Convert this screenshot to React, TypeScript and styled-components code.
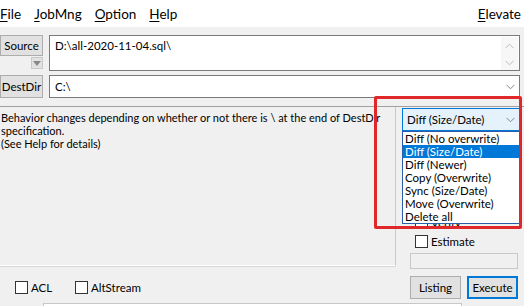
import React from "react";
import styled, { createGlobalStyle } from "styled-components";

const GlobalStyle = createGlobalStyle`
  html, body { margin: 0; padding: 0; background: #f0f0f0; }
  * { box-sizing: border-box; }
`;

const FONT = `"Lato", "Noto Sans", "Liberation Sans", sans-serif`;

const Window = styled.div`
  position: relative;
  width: 524px;
  height: 306px;
  overflow: hidden;
  background: #f0f0f0;
  font-family: ${FONT};
  font-size: 11px;
  color: #000;
`;

const MenuBar = styled.div`
  height: 27px;
  background: #fff;
  display: flex;
  align-items: center;
  padding: 0 3px 0 0;
  font-size: 13.5px;
`;

const MenuItem = styled.span<{ $push?: boolean }>`
  margin-right: ${(p) => (p.$push ? "0" : "13px")};
  margin-left: ${(p) => (p.$push ? "auto" : "0")};
  & u { text-decoration: underline; text-underline-offset: 2px; }
`;

const Content = styled.div`
  padding: 8px 4px 0 0;
  display: flex;
  flex-direction: column;
`;

const PathRow = styled.div<{ $gap?: number }>`
  display: grid;
  grid-template-columns: 43px 1fr;
  column-gap: 6px;
  margin-top: ${(p) => p.$gap ?? 0}px;
`;

const SideCol = styled.div`
  display: flex;
  flex-direction: column;
  align-items: flex-end;
  gap: 1px;
`;

const PushButton = styled.button<{ $h?: number; $w?: number; $primary?: boolean }>`
  width: ${(p) => (p.$w ? `${p.$w}px` : "100%")};
  height: ${(p) => p.$h ?? 22}px;
  padding: 0;
  background: #e1e1e1;
  border: 1px solid ${(p) => (p.$primary ? "#0078d7" : "#adadad")};
  box-shadow: ${(p) => (p.$primary ? "inset 0 0 0 1px #0078d7" : "none")};
  font-family: ${FONT};
  font-size: 11.5px;
  color: #000;
`;

const MiniDrop = styled.div`
  width: 12px;
  height: 12px;
  background: #e1e1e1;
  border: 1px solid #c8c8c8;
  display: flex;
  align-items: center;
  justify-content: center;
`;

const TextBox = styled.div<{ $h: number }>`
  height: ${(p) => p.$h}px;
  background: #fff;
  border: 1px solid #7a7a7a;
  display: flex;
  align-items: ${(p) => (p.$h > 30 ? "flex-start" : "center")};
  padding: ${(p) => (p.$h > 30 ? "3px 0 0 5px" : "0 0 0 5px")};
  font-size: 11.5px;
`;

const TextValue = styled.span`
  flex: 1;
`;

const ScrollBar = styled.div`
  width: 17px;
  align-self: stretch;
  margin: -2px 1px 0 0;
  display: flex;
  flex-direction: column;
  justify-content: space-between;
  align-items: center;
  padding: 6px 0 4px;
  background: #f7f7f7;
`;

const DropArrow = styled.div`
  width: 17px;
  display: flex;
  justify-content: center;
`;

const Separator = styled.div`
  height: 1px;
  background: #a0a0a0;
  margin-top: 8px;
  margin-right: -4px;
`;

const Main = styled.div`
  display: grid;
  grid-template-columns: 396px 1fr;
  column-gap: 6px;
`;

const LeftCol = styled.div`
  display: flex;
  flex-direction: column;
`;

const InfoPanel = styled.div`
  height: 159px;
  border-right: 1px solid #c8c8c8;
  border-bottom: 1px solid #fff;
  box-shadow: 0 1px 0 #d8d8d8;
  padding: 4px 0 0 1px;
  line-height: 13px;
  font-size: 11px;
  white-space: nowrap;
`;

const CheckRow = styled.div`
  display: flex;
  padding: 14px 0 0 15px;
`;

const Check = styled.label<{ $w?: number }>`
  display: flex;
  align-items: center;
  gap: 3px;
  height: 14px;
  width: ${(p) => (p.$w ? `${p.$w}px` : "auto")};
  font-size: 11.5px;
`;

const Box = styled.span`
  width: 13px;
  height: 13px;
  background: #fff;
  border: 1px solid #333;
  display: inline-block;
`;

const RightCol = styled.div`
  position: relative;
  display: flex;
  flex-direction: column;
  padding-top: 1px;
`;

const Combo = styled.div`
  height: 23px;
  background: #e5f1fb;
  border: 1px solid #0078d7;
  display: flex;
  align-items: center;
  padding: 0 0 0 4px;
  font-size: 11.5px;
`;

const ComboText = styled.span`
  flex: 1;
`;

const OptionList = styled.div`
  display: flex;
  flex-direction: column;
  gap: 5px;
  padding: 84px 0 0 13px;
`;

const StatusBox = styled.div`
  height: 16px;
  margin: 5px 2px 0 8px;
  border: 1px solid #c8c8c8;
  background: #f0f0f0;
`;

const ButtonRow = styled.div`
  display: flex;
  gap: 6px;
  margin: 7px 2px 0 8px;
`;

const BottomInput = styled.div`
  margin: 4px 0 0 43px;
  width: 419px;
  height: 20px;
  background: #fff;
  border: 1px solid #c8c8c8;
`;

const DropList = styled.div`
  position: absolute;
  left: 0;
  top: 24px;
  width: 118px;
  border: 1px solid #2a5ea8;
  background: #fff;
  display: flex;
  flex-direction: column;
  z-index: 2;
`;

const DropItem = styled.div<{ $sel?: boolean }>`
  height: 13px;
  line-height: 13px;
  padding-left: 2px;
  font-size: 11.5px;
  background: ${(p) => (p.$sel ? "#0078d7" : "#fff")};
  color: ${(p) => (p.$sel ? "#fff" : "#000")};
  white-space: nowrap;
`;

const Highlight = styled.div`
  position: absolute;
  left: 374px;
  top: 96px;
  width: 148px;
  height: 133px;
  border: 3px solid #e0282a;
  border-radius: 2px;
  z-index: 3;
  pointer-events: none;
`;

const Chevron = ({ color = "#888" }: { color?: string }) => (
  <svg width="9" height="6" viewBox="0 0 9 6">
    <path d="M0.5 0.8 L4.5 4.8 L8.5 0.8" fill="none" stroke={color} strokeWidth="1" />
  </svg>
);

const ChevronUp = () => (
  <svg width="9" height="6" viewBox="0 0 9 6">
    <path d="M0.5 5.2 L4.5 1.2 L8.5 5.2" fill="none" stroke="#bbb" strokeWidth="1" />
  </svg>
);

const items = [
  "Diff (No overwrite)",
  "Diff (Size/Date)",
  "Diff (Newer)",
  "Copy (Overwrite)",
  "Sync (Size/Date)",
  "Move (Overwrite)",
  "Delete all",
];

export default function App() {
  return (
    <Window>
      <GlobalStyle />
      <MenuBar>
        <MenuItem><u>F</u>ile</MenuItem>
        <MenuItem><u>J</u>obMng</MenuItem>
        <MenuItem><u>O</u>ption</MenuItem>
        <MenuItem><u>H</u>elp</MenuItem>
        <MenuItem $push><u>E</u>levate</MenuItem>
      </MenuBar>
      <Content>
        <PathRow>
          <SideCol>
            <PushButton $h={21}>Source</PushButton>
            <MiniDrop>
              <svg width="8" height="5" viewBox="0 0 8 5">
                <path d="M0 0 H8 L4 5 Z" fill="#888" />
              </svg>
            </MiniDrop>
          </SideCol>
          <TextBox $h={36}>
            <TextValue>D:\all-2020-11-04.sql\</TextValue>
            <ScrollBar>
              <ChevronUp />
              <Chevron color="#bbb" />
            </ScrollBar>
          </TextBox>
        </PathRow>
        <PathRow $gap={4}>
          <PushButton $h={23}>DestDir</PushButton>
          <TextBox $h={23}>
            <TextValue>C:\</TextValue>
            <DropArrow>
              <Chevron />
            </DropArrow>
          </TextBox>
        </PathRow>
        <Separator />
        <Main>
          <LeftCol>
            <InfoPanel>
              Behavior changes depending on whether or not there is \ at the end of DestDir
              <br />
              specification.
              <br />
              (See Help for details)
            </InfoPanel>
            <CheckRow>
              <Check $w={60}><Box />ACL</Check>
              <Check><Box />AltStream</Check>
            </CheckRow>
          </LeftCol>
          <RightCol>
            <Combo>
              <ComboText>Diff (Size/Date)</ComboText>
              <DropArrow>
                <Chevron />
              </DropArrow>
            </Combo>
            <DropList>
              {items.map((t, i) => (
                <DropItem key={t} $sel={i === 1}>{t}</DropItem>
              ))}
            </DropList>
            <OptionList>
              <Check><Box />Verify</Check>
              <Check><Box />Estimate</Check>
            </OptionList>
            <StatusBox />
            <ButtonRow>
              <PushButton $h={23} $w={51}>Listing</PushButton>
              <PushButton $h={23} $w={51} $primary>Execute</PushButton>
            </ButtonRow>
          </RightCol>
        </Main>
        <BottomInput />
      </Content>
      <Highlight />
    </Window>
  );
}
